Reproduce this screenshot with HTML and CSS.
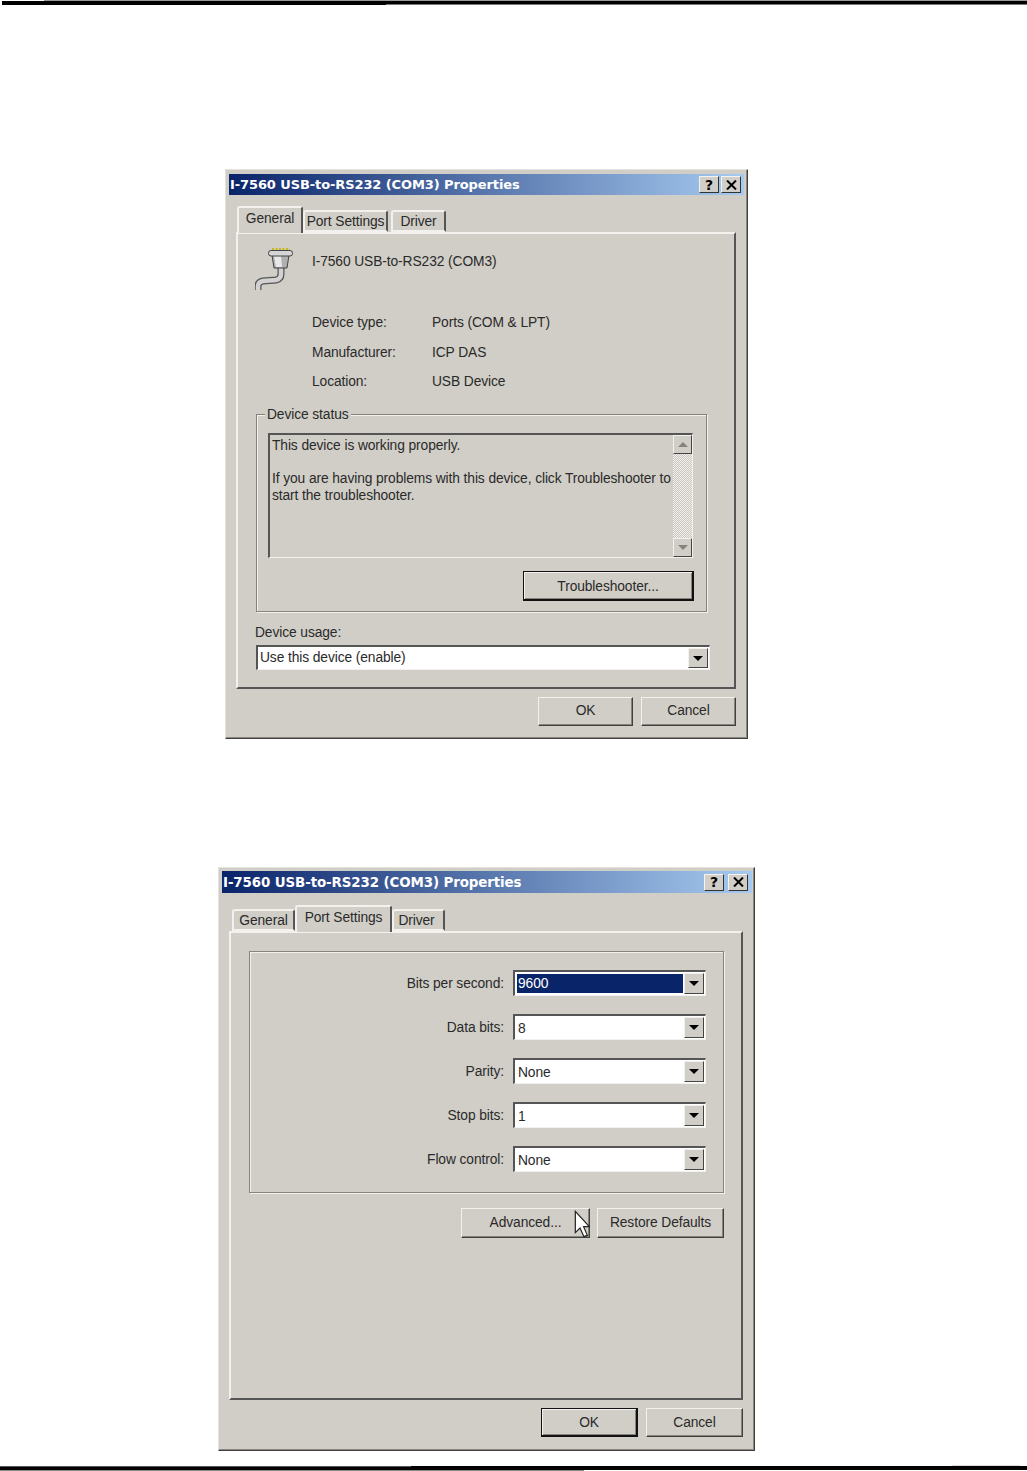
FILE: index.html
```html
<!DOCTYPE html>
<html lang="en">
<head>
    <meta charset="UTF-8">
    <meta name="viewport" content="width=device-width, initial-scale=1.0">
    <title>I-7560 USB-to-RS232 (COM3) Properties</title>
    <link rel="stylesheet" href="styles.css">
</head>
<body>
    <div class="rule-top"></div>

    <!-- General tab -->
    <div class="dialog dialog-general">
        <div class="title-bar">
            <span class="title-text">I-7560 USB-to-RS232 (COM3) Properties</span>
            <span class="title-btn">?</span>
            <span class="title-btn title-close">
                <svg width="11" height="10" viewBox="0 0 11 10"><path d="M1 0.5 L10 9.5 M10 0.5 L1 9.5" stroke="#000" stroke-width="2" fill="none"/></svg>
            </span>
        </div>
        <div class="tabs">
            <div class="tab tab-active tab-g1">General</div>
            <div class="tab tab-p1">Port Settings</div>
            <div class="tab tab-d1">Driver</div>
        </div>
        <div class="page">
            <div class="device-head">
                <svg class="device-icon" width="41" height="43" viewBox="0 0 41 43">
                    <path d="M26 20 V27 Q26 32 21 33 L8 34 Q3 35 3 39 V43" fill="none" stroke="#555" stroke-width="7"/>
                    <path d="M26 20 V27 Q26 32 21 33 L8 34 Q3 35 3 39 V43" fill="none" stroke="#d2d2d2" stroke-width="4.5"/>
                    <path d="M17 8 H34 L32 21 H19 Z" fill="#b0b0b0" stroke="#444"/>
                    <path d="M19 9 H26 L27 20 H21 Z" fill="#e8e8e8"/>
                    <rect x="13.5" y="3.5" width="24" height="5.5" rx="2.5" fill="#d6d6d6" stroke="#444"/>
                    <path d="M17 2 H35" stroke="#c8b820" stroke-width="2" stroke-dasharray="2 1.5"/>
                </svg>
                <span class="device-name">I-7560 USB-to-RS232 (COM3)</span>
            </div>
            <div class="props">
                <span>Device type:</span><span>Ports (COM &amp; LPT)</span>
                <span>Manufacturer:</span><span>ICP DAS</span>
                <span>Location:</span><span>USB Device</span>
            </div>
            <div class="group group-status">
                <span class="legend">Device status</span>
                <div class="status-box">
                    <div class="status-text">
                        This device is working properly.<br><br>
                        If you are having problems with this device, click Troubleshooter to<br>
                        start the troubleshooter.
                    </div>
                    <div class="scrollbar">
                        <span class="scroll-btn"><i class="arrow arrow-up"></i></span>
                        <span class="scroll-track"></span>
                        <span class="scroll-btn"><i class="arrow arrow-grey"></i></span>
                    </div>
                </div>
                <div class="group-actions">
                    <button class="btn btn-default btn-trouble">Troubleshooter...</button>
                </div>
            </div>
            <div class="usage-label">Device usage:</div>
            <div class="combo combo-usage">
                <span class="combo-value">Use this device (enable)</span>
                <span class="combo-btn"><i class="arrow"></i></span>
            </div>
        </div>
        <div class="footer">
            <button class="btn btn-ok1">OK</button>
            <button class="btn btn-ok1">Cancel</button>
        </div>
    </div>

    <!-- Port Settings tab -->
    <div class="dialog dialog-port">
        <div class="title-bar">
            <span class="title-text">I-7560 USB-to-RS232 (COM3) Properties</span>
            <span class="title-btn">?</span>
            <span class="title-btn title-close">
                <svg width="11" height="10" viewBox="0 0 11 10"><path d="M1 0.5 L10 9.5 M10 0.5 L1 9.5" stroke="#000" stroke-width="2" fill="none"/></svg>
            </span>
        </div>
        <div class="tabs">
            <div class="tab tab-g2">General</div>
            <div class="tab tab-active tab-p2">Port Settings</div>
            <div class="tab tab-d2">Driver</div>
        </div>
        <div class="page page-port">
            <div class="group group-port">
                <div class="port-row">
                    <label>Bits per second:</label>
                    <div class="combo combo-port combo-selected">
                        <span class="combo-value">9600</span>
                        <span class="combo-btn"><i class="arrow"></i></span>
                    </div>
                </div>
                <div class="port-row">
                    <label>Data bits:</label>
                    <div class="combo combo-port">
                        <span class="combo-value">8</span>
                        <span class="combo-btn"><i class="arrow"></i></span>
                    </div>
                </div>
                <div class="port-row">
                    <label>Parity:</label>
                    <div class="combo combo-port">
                        <span class="combo-value">None</span>
                        <span class="combo-btn"><i class="arrow"></i></span>
                    </div>
                </div>
                <div class="port-row">
                    <label>Stop bits:</label>
                    <div class="combo combo-port">
                        <span class="combo-value">1</span>
                        <span class="combo-btn"><i class="arrow"></i></span>
                    </div>
                </div>
                <div class="port-row">
                    <label>Flow control:</label>
                    <div class="combo combo-port">
                        <span class="combo-value">None</span>
                        <span class="combo-btn"><i class="arrow"></i></span>
                    </div>
                </div>
            </div>
            <div class="port-actions">
                <button class="btn btn-advanced">Advanced...
                    <svg class="cursor" width="16" height="28" viewBox="0 0 12 21"><path d="M1 1 V17 L4.5 13.5 L7.5 20 L10 19 L7.2 12.5 H11.5 Z" fill="#fff" stroke="#222" stroke-width="0.9"/></svg>
                </button>
                <button class="btn btn-restore">Restore Defaults</button>
            </div>
        </div>
        <div class="footer">
            <button class="btn btn-default btn-ok2">OK</button>
            <button class="btn btn-ok2">Cancel</button>
        </div>
    </div>

    <div class="rule-bottom"></div>
</body>
</html>
```

FILE: styles.css
```css
* {
    box-sizing: border-box;
}

html, body {
    margin: 0;
    padding: 0;
    background: #fff;
}

body {
    font-family: "Liberation Sans", Arial, sans-serif;
    font-size: 13.8px;
    letter-spacing: -0.1px;
    color: #2a2a2a;
    overflow: hidden;
}

.rule-top {
    height: 5px;
    background:
        linear-gradient(#000, #000) 2px 1px / 100% 3px no-repeat,
        linear-gradient(#000, #000) 2px 4px / 384px 1px no-repeat,
        linear-gradient(#777, #777) 386px 4px / 100% 1px no-repeat,
        linear-gradient(#999, #999) 44px 0 / 100% 1px no-repeat;
}

.rule-bottom {
    height: 6px;
    margin-top: 14px;
    background:
        linear-gradient(#ddd, #ddd) 952px 0 / 68px 1px no-repeat,
        linear-gradient(#555, #555) 0 1px / 411px 1px no-repeat,
        linear-gradient(#000, #000) 411px 1px / 100% 1px no-repeat,
        linear-gradient(#000, #000) 0 2px / 100% 3px no-repeat,
        linear-gradient(#888, #888) 0 5px / 584px 1px no-repeat;
}

/* dialog frame */
.dialog {
    background: #d1cec7;
    border: 1px solid;
    border-color: #e4e2dd #404040 #404040 #e4e2dd;
    box-shadow: inset -1px -1px 0 #8a8880;
}

.dialog-general {
    width: 523px;
    height: 570px;
    margin: 164px 0 0 225px;
    padding: 4px 3px 0;
}

.dialog-port {
    width: 537px;
    height: 584px;
    margin: 128px 0 0 218px;
    padding: 3px 2px 0 3px;
}

.title-bar {
    display: flex;
    align-items: center;
    gap: 2px;
    height: 21px;
    padding: 0 3px 0 1px;
    background: linear-gradient(90deg, #0a246a, #a6caf0);
}

.dialog-port .title-bar {
    height: 22px;
    gap: 4px;
    padding-right: 4px;
}

.title-text {
    flex: 1;
    font-family: "DejaVu Sans", Verdana, sans-serif;
    font-size: 13px;
    font-weight: bold;
    letter-spacing: -0.1px;
    color: #fff;
    white-space: nowrap;
}

.dialog-port .title-text {
    font-size: 13.4px;
}

.title-btn {
    display: flex;
    align-items: center;
    justify-content: center;
    width: 20px;
    height: 17px;
    background: #d1cec7;
    border: 1px solid;
    border-color: #f4f3f0 #333 #333 #f4f3f0;
    font-family: "DejaVu Sans", sans-serif;
    font-size: 14px;
    font-weight: bold;
    color: #000;
}

/* tabs */
.tabs {
    position: relative;
    z-index: 1;
    display: flex;
    align-items: flex-end;
    height: 26px;
    margin-top: 11px;
    padding-left: 8px;
}

.dialog-port .tabs {
    margin-top: 12px;
    padding-left: 10px;
}

.tab {
    height: 22px;
    padding-top: 2px;
    text-align: center;
    white-space: nowrap;
    border-top: 2px solid #f2f1ee;
    border-left: 2px solid #f2f1ee;
    border-right: 2px solid #555;
    border-radius: 3px 3px 0 0;
    border-bottom: 2px solid #f2f1ee;
}

.tab-active {
    height: 27px;
    margin-bottom: -1px;
    padding-top: 3px;
    border-bottom: 0;
    background: #d1cec7;
}

.tab-g1 { width: 66px; }
.tab-p1 { width: 85px; }
.tab-d1 { width: 55px; margin-left: 3px; }
.tab-g2 { width: 63px; }
.tab-p2 { width: 97px; }
.tab-d2 { width: 53px; padding-right: 4px; }

.page {
    height: 457px;
    margin: 0 8px 0 7px;
    padding: 13px 25px 0 17px;
    border: 2px solid;
    border-color: #f2f1ee #555 #555 #f2f1ee;
}

.page-port {
    height: 469px;
    margin: 0 9px 0 7px;
    padding: 18px 17px 0 18px;
}

/* general tab */
.device-head {
    display: flex;
    align-items: flex-start;
    gap: 16px;
    height: 43px;
}

.device-icon {
    flex: none;
}

.device-name {
    padding-top: 7px;
}

.props {
    display: grid;
    grid-template-columns: 120px auto;
    grid-auto-rows: 18px;
    row-gap: 11.5px;
    margin: 25px 0 0 57px;
}

.group {
    position: relative;
    border: 1px solid #85837c;
    box-shadow: 1px 1px 0 #f2f1ee, inset 1px 1px 0 #f2f1ee;
}

.group-status {
    width: 451px;
    height: 198px;
    margin: 22px 0 0 1px;
    padding: 18px 12px 0 11px;
}

.legend {
    position: absolute;
    top: -8px;
    left: 8px;
    padding: 0 2px;
    background: #d1cec7;
}

.status-box {
    display: flex;
    justify-content: space-between;
    width: 425px;
    height: 125px;
    border: solid;
    border-width: 2px 1px 1px 2px;
    border-color: #555 #f2f1ee #f2f1ee #555;
}

.status-text {
    flex: 1;
    min-width: 0;
    padding: 3px 0 0 2px;
    line-height: 16.5px;
    white-space: nowrap;
}

.scrollbar {
    display: flex;
    flex: none;
    flex-direction: column;
    width: 19px;
}

.scroll-btn {
    display: flex;
    align-items: center;
    justify-content: center;
    flex: none;
    height: 19px;
    background: #d1cec7;
    border: 1px solid;
    border-color: #f2f1ee #444 #444 #f2f1ee;
}

.scroll-track {
    flex: 1;
    background: repeating-conic-gradient(#f1f0ec 0 25%, #c8c5be 0 50%) 0 0 / 2px 2px;
}

.arrow {
    display: block;
    width: 0;
    height: 0;
    border-style: solid;
    border-width: 5px 5px 0;
    border-color: #000 transparent transparent;
}

.arrow-grey {
    border-top-color: #85837c;
}

.arrow-up {
    border-width: 0 5px 5px;
    border-color: transparent transparent #85837c;
}

.group-actions {
    display: flex;
    justify-content: flex-end;
    margin-top: 13px;
}

.usage-label {
    height: 18px;
    margin-top: 12px;
    padding-top: 1px;
}

.combo {
    display: flex;
    align-items: center;
    margin-top: 3px;
    padding: 1px 1px 1px 2px;
    background: #fff;
    border: solid;
    border-width: 2px 1px 1px 2px;
    border-color: #555 #f2f1ee #f2f1ee #555;
}

.combo-usage {
    width: 454px;
    height: 25px;
    margin-left: 1px;
}

.combo-usage .combo-value {
    padding: 0 0 2px;
}

.combo-value {
    flex: 1;
    padding-top: 1px;
    white-space: nowrap;
}

.combo-btn {
    display: flex;
    align-items: center;
    justify-content: center;
    flex: none;
    width: 20px;
    height: 100%;
    background: #d1cec7;
    border: 1px solid;
    border-color: #f2f1ee #444 #444 #f2f1ee;
}

/* port settings tab */
.group-port {
    display: flex;
    flex-direction: column;
    gap: 18px;
    height: 242px;
    padding: 18px 17px 0 0;
}

.port-row {
    display: flex;
    justify-content: flex-end;
    align-items: center;
    gap: 9px;
    height: 26px;
}

.combo-port {
    width: 193px;
    height: 26px;
    margin: 0;
    padding-left: 3px;
}

.combo-selected {
    padding-left: 2px;
}

.combo-selected .combo-value {
    align-self: stretch;
    margin: 1px 1px 1px 0;
    padding: 0 0 0 1px;
    line-height: 19px;
    background: #0a246a;
    color: #fff;
}

.port-actions {
    display: flex;
    justify-content: flex-end;
    gap: 7px;
    margin-top: 15px;
}

.footer {
    display: flex;
    justify-content: flex-end;
    gap: 8px;
    margin-top: 8px;
    padding-right: 8px;
}

.dialog-port .footer {
    padding-right: 9px;
}

.btn {
    height: 29px;
    padding: 0 0 2px;
    background: #d1cec7;
    border: 1px solid;
    border-color: #f2f1ee #404040 #404040 #f2f1ee;
    box-shadow: inset -1px -1px 0 #85837c;
    font: inherit;
    letter-spacing: inherit;
    color: inherit;
}

.btn-default {
    border-width: 1px 2px 2px 1px;
    border-color: #111;
    box-shadow: inset 1px 1px 0 #f2f1ee, inset -1px -1px 0 #85837c;
}

.btn-trouble {
    width: 171px;
    height: 30px;
    padding: 1px 0 0;
}

.btn-ok1 {
    width: 95px;
    padding-bottom: 3px;
}

.btn-ok2 {
    width: 97px;
    padding: 0;
}

.btn-advanced {
    position: relative;
    width: 129px;
    height: 30px;
}

.btn-restore {
    width: 127px;
    height: 30px;
}

.cursor {
    position: absolute;
    top: 1px;
    left: 112px;
}
```
